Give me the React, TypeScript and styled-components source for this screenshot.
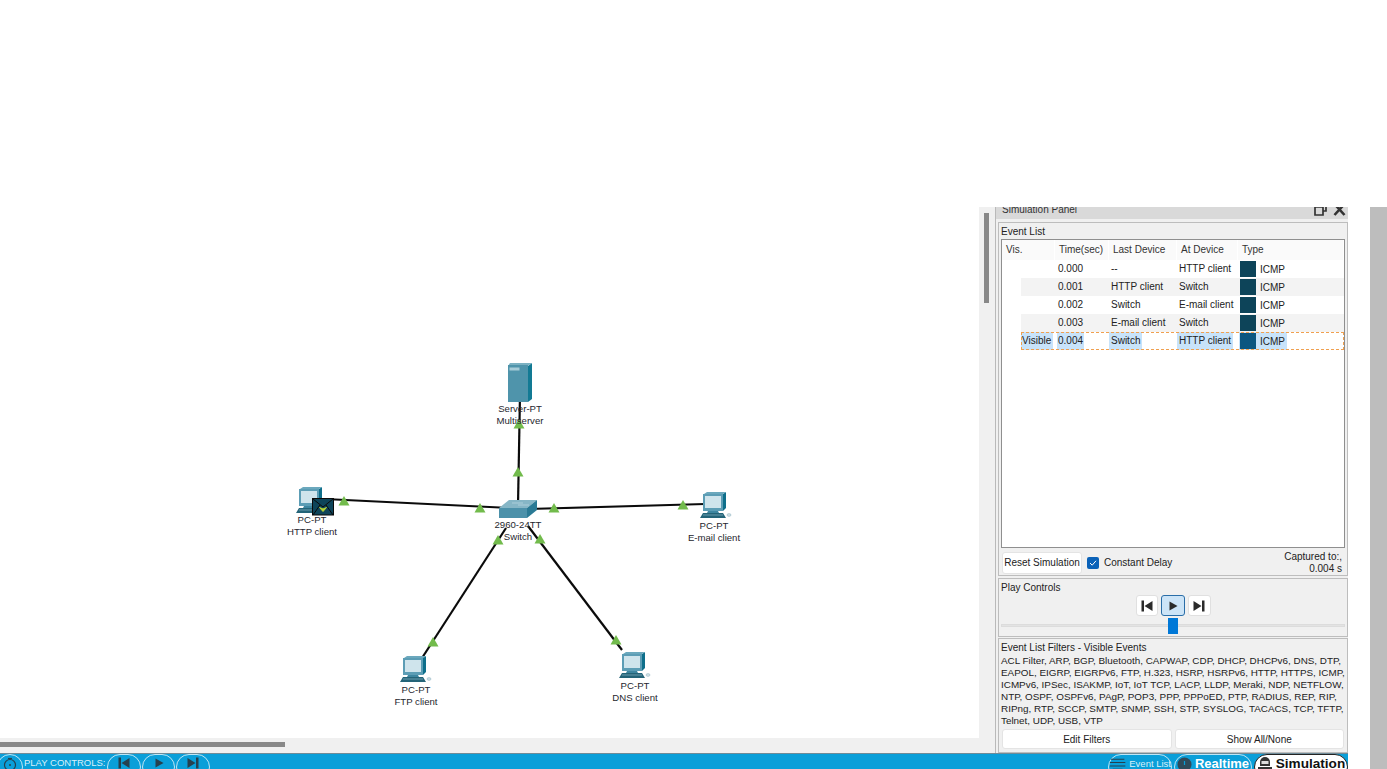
import React from "react";
import styled, { createGlobalStyle } from "styled-components";

const GlobalStyle = createGlobalStyle`
  html, body {
    margin: 0;
    padding: 0;
    background: #fff;
    overflow: hidden;
  }
  body {
    font-family: "Liberation Sans", Arial, sans-serif;
    font-size: 10px;
    color: #222;
  }
`;

const Page = styled.div`
  width: 1387px;
  height: 769px;
  display: flex;
  flex-direction: column;
  overflow: hidden;
`;

const TopBlank = styled.div`
  height: 207px;
  flex: none;
`;

const Window = styled.div`
  flex: 1;
  display: flex;
  min-height: 0;
`;

const MainColumn = styled.div`
  width: 1348px;
  display: flex;
  flex-direction: column;
`;

const RightGap = styled.div`
  width: 22px;
`;

const RightEdge = styled.div`
  width: 17px;
  background: #bdbdbd;
`;

const Workspace = styled.div`
  flex: 1;
  display: flex;
  min-height: 0;
`;

const CanvasColumn = styled.div`
  width: 995px;
  display: flex;
  flex-direction: column;
`;

const CanvasRow = styled.div`
  flex: 1;
  display: flex;
  min-height: 0;
`;

const Canvas = styled.div`
  position: relative;
  width: 979px;
  background: #fff;
  overflow: hidden;
`;

const VScroll = styled.div`
  width: 16px;
  background: #f0f0f0;
  padding: 6px 6px 0 5px;
  box-sizing: border-box;
`;

const VThumb = styled.div`
  height: 90px;
  background: #888;
`;

const HScroll = styled.div`
  height: 15px;
  background: #f0f0f0;
  padding-top: 4px;
  box-sizing: border-box;
`;

const HThumb = styled.div`
  width: 285px;
  height: 5px;
  background: #888;
`;

const Wires = styled.svg`
  position: absolute;
  left: 0;
  top: 0;
`;

const Device = styled.svg<{ $x: number; $y: number }>`
  position: absolute;
  left: ${(p) => p.$x}px;
  top: ${(p) => p.$y - 207}px;
`;

const NodeLabel = styled.div<{ $x: number; $y: number }>`
  position: absolute;
  left: ${(p) => p.$x - 50}px;
  top: ${(p) => p.$y - 207}px;
  width: 100px;
  text-align: center;
  line-height: 12px;
  font-size: 9.6px;
  color: #26262e;
`;

const Panel = styled.div`
  width: 353px;
  background: #f0f0f0;
  border-left: 1px solid #b9b9b9;
  box-sizing: border-box;
  display: flex;
  flex-direction: column;
`;

const PanelHeader = styled.div`
  height: 12px;
  flex: none;
  background: #d9d9d9;
  display: flex;
  justify-content: space-between;
  align-items: flex-end;
  padding: 0 2px 3px 6px;
  box-sizing: border-box;
  overflow: hidden;
  line-height: 12px;
  color: #333;
`;

const HeaderIcons = styled.div`
  display: flex;
  gap: 6px;
  align-items: flex-end;
`;

const Group = styled.section<{ $height: number; $gap: number }>`
  height: ${(p) => p.$height}px;
  flex: none;
  box-sizing: border-box;
  margin: ${(p) => p.$gap}px 0 0 2px;
  border: 1px solid #bdbdbd;
  padding: 0 2px;
  display: flex;
  flex-direction: column;
`;

const GroupTitle = styled.div`
  height: 16px;
  line-height: 17px;
  flex: none;
  color: #222;
`;

const EventTable = styled.div`
  height: 309px;
  flex: none;
  box-sizing: border-box;
  border: 1px solid #8f8f8f;
  background: #fff;
`;

const HeadRow = styled.div`
  display: grid;
  grid-template-columns: 53px 54px 68px 61px 1fr;
  height: 20px;
  background: #fafafa;
`;

const HeadCell = styled.div`
  height: 20px;
  line-height: 20px;
  padding-left: 4px;
  border-right: 1px solid #fff;
  color: #333;
`;

const Stripe = styled.div<{ $alt?: boolean; $selected?: boolean }>`
  margin-left: 19px;
  height: 18px;
  background: ${(p) => (p.$alt ? "#f3f3f3" : "#fff")};
  ${(p) => (p.$selected ? "outline: 1px dashed #f0a050; outline-offset: -1px;" : "")}
`;

const RowCells = styled.div`
  display: grid;
  grid-template-columns: 34px 54px 68px 61px 1fr;
  height: 18px;
  align-items: center;
`;

const Cell = styled.div<{ $pad?: number }>`
  display: flex;
  padding-left: ${(p) => p.$pad ?? 0}px;
  min-width: 0;
`;

const CellText = styled.span<{ $on?: boolean; $width?: number; $inset?: number }>`
  display: block;
  line-height: 18px;
  height: 18px;
  padding: 0 ${(p) => p.$inset ?? 2}px;
  white-space: nowrap;
  background: ${(p) => (p.$on ? "#c8e3fa" : "transparent")};
  ${(p) => (p.$width ? `width: ${p.$width}px; box-sizing: border-box;` : "")}
`;

const TypeCell = styled.div<{ $on?: boolean }>`
  display: flex;
  align-items: center;
  gap: 4px;
  width: 48px;
  margin-left: 1px;
  padding-left: 1px;
  box-sizing: border-box;
  height: 18px;
  background: ${(p) => (p.$on ? "#c8e3fa" : "transparent")};
`;

const Swatch = styled.span<{ $on?: boolean }>`
  width: 16px;
  height: 16px;
  flex: none;
  background: ${(p) => (p.$on ? "#0b5680" : "#0d4459")};
`;

const FooterRow = styled.div`
  flex: 1;
  display: flex;
  align-items: center;
  gap: 5px;
  margin-left: 1px;
  padding-top: 2px;
`;

const WhiteButton = styled.button<{ $grow?: boolean }>`
  font: inherit;
  color: #222;
  background: #fff;
  border: 1px solid #e4e4e4;
  border-radius: 3px;
  padding: 0;
  height: 22px;
  white-space: nowrap;
  width: ${(p) => (p.$grow ? "auto" : "80px")};
  flex: ${(p) => (p.$grow ? 1 : "none")};
`;

const CheckBox = styled.span`
  width: 12px;
  height: 12px;
  border-radius: 2px;
  background: #0b62b8;
  display: flex;
  align-items: center;
  justify-content: center;
  flex: none;
`;

const Captured = styled.div`
  margin-left: auto;
  text-align: right;
  line-height: 12px;
  padding-right: 3px;
`;

const TransportRow = styled.div`
  display: flex;
  justify-content: center;
  gap: 3px;
  height: 21px;
  flex: none;
`;

const TransportButton = styled.button<{ $active?: boolean; $w: number }>`
  width: ${(p) => p.$w}px;
  height: 21px;
  padding: 0;
  box-sizing: border-box;
  background: ${(p) => (p.$active ? "#cce4f7" : "#fff")};
  border: 1px solid ${(p) => (p.$active ? "#2a6ea8" : "#e0e0e0")};
  border-radius: 3px;
  display: flex;
  align-items: center;
  justify-content: center;
`;

const SliderArea = styled.div`
  position: relative;
  flex: 1;
`;

const SliderTrack = styled.div`
  position: absolute;
  left: 0;
  right: 0;
  top: 8px;
  height: 3px;
  background: #e3e3e3;
  border: 1px solid #dcdcdc;
  box-sizing: border-box;
`;

const SliderThumb = styled.div`
  position: absolute;
  left: 167px;
  top: 2px;
  width: 10px;
  height: 16px;
  background: #0078d7;
`;

const FilterText = styled.div`
  font-size: 9.9px;
  line-height: 12px;
  height: 72px;
  flex: none;
  white-space: nowrap;
  color: #222;
`;

const FilterButtons = styled.div`
  display: flex;
  gap: 3px;
  margin: 2px 1px 0 1px;
`;

const FilterButton = styled(WhiteButton)`
  height: 20px;
`;

const Taskbar = styled.div`
  height: 16px;
  flex: none;
  background: #0a9fd9;
  border-top: 1px solid #6f8b98;
  box-sizing: border-box;
  display: flex;
  align-items: flex-start;
  overflow: hidden;
  color: #d8f0fa;
`;

const Pill = styled.div<{ $w: number; $white?: boolean }>`
  width: ${(p) => p.$w}px;
  height: 26px;
  flex: none;
  box-sizing: border-box;
  border: 1px solid ${(p) => (p.$white ? "#222" : "#bfe6f5")};
  border-radius: 13px;
  background: ${(p) => (p.$white ? "#fff" : "transparent")};
  color: ${(p) => (p.$white ? "#111" : "#fff")};
  display: flex;
  align-items: flex-start;
  justify-content: center;
  gap: 3px;
  padding-top: 2px;
  white-space: nowrap;
`;

const HomePill = styled(Pill)`
  margin-left: -3px;
`;

const BarLabel = styled.div`
  margin: 3px 2px 0 1px;
  font-size: 9.5px;
  line-height: 12px;
  white-space: nowrap;
`;

const Spacer = styled.div`
  flex: 1;
`;

const PillGroup = styled.div<{ $gap: number }>`
  display: flex;
  gap: ${(p) => p.$gap}px;
`;

const SmallTab = styled.span`
  font-size: 9.5px;
  line-height: 12px;
  margin-top: 1px;
  color: #d8f0fa;
`;

const BigTab = styled.span<{ $size: number }>`
  font-size: ${(p) => p.$size}px;
  font-weight: 700;
  line-height: 14px;
`;

const triangles = [
  [344, 501],
  [480, 508],
  [518, 472],
  [519, 424],
  [554, 508],
  [683, 505],
  [498, 540],
  [540, 539],
  [433, 642],
  [616, 640],
];

const PcIcon = ({ x, y }: { x: number; y: number }) => (
  <Device $x={x} $y={y} width="34" height="28" viewBox="0 0 34 28">
    <path d="M24 3 L27 1 L27 17 L24 20 Z" fill="#0e6f8b" />
    <path d="M5 3 L8 1 L27 1 L24 3 Z" fill="#6ba8bd" />
    <rect x="4" y="3" width="20" height="17" fill="#5c9db5" />
    <rect x="6" y="5" width="16" height="12" fill="#cfe4ec" />
    <path d="M9 20 H19 L20 22 H8 Z" fill="#3e86a0" />
    <path d="M4 22 H24 L27 27 H1 Z" fill="#246478" />
    <path d="M4 24 H24" stroke="#8ab6c6" strokeWidth="0.7" />
    <ellipse cx="30" cy="24" rx="2" ry="1.4" fill="#cfe0e6" stroke="#7ea7b6" strokeWidth="0.4" />
  </Device>
);

const ServerIcon = () => (
  <Device $x={508} $y={363} width="25" height="40" viewBox="0 0 25 40">
    <path d="M20 3 L24 0 L24 36 L20 39 Z" fill="#127a94" />
    <path d="M2 0 L24 0 L20 3 L0 3 Z" fill="#7bb1c2" />
    <rect x="0" y="2" width="20" height="37" fill="#4f94ab" />
    <rect x="1.5" y="4.5" width="10" height="3" fill="#a7ccd8" />
  </Device>
);

const SwitchIcon = () => (
  <Device $x={499} $y={499} width="39" height="20" viewBox="0 0 39 20">
    <path d="M0 9 L10 1 L38 1 L28 9 Z" fill="#86b6c6" />
    <path d="M13 4 L24 4 M19 6 L30 6" stroke="#b6d4df" strokeWidth="0.8" />
    <rect x="0" y="9" width="28" height="10" fill="#4c91aa" />
    <path d="M28 9 L38 1 L38 11 L28 19 Z" fill="#2a7a95" />
  </Device>
);

const Envelope = () => (
  <Device $x={312} $y={498} width="22" height="18" viewBox="0 0 22 18">
    <rect x="0.5" y="0.5" width="21" height="16.5" fill="#0d4459" stroke="#0a0a0a" />
    <path d="M1 1 L11 9 L21 1 M1 17 L8 7 M21 17 L14 7" fill="none" stroke="#0a0a0a" strokeWidth="1" />
    <path d="M7.5 9.5 L11 13.5 L14.5 9.5 L11 11 Z" fill="#b7d433" stroke="#b7d433" strokeWidth="1" />
  </Device>
);

const Network = () => (
  <Wires width="979" height="531" viewBox="0 207 979 531">
    <g stroke="#0b0b0b" strokeWidth="2.2" fill="none">
      <path d="M520 395 L518 505" />
      <path d="M325 499 L510 508" />
      <path d="M705 504 L528 509" />
      <path d="M422 658 L506 528" />
      <path d="M622 650 L528 526" />
    </g>
  </Wires>
);

const Arrows = () => (
  <Wires width="979" height="531" viewBox="0 207 979 531">
    {triangles.map(([x, y]) => (
      <path key={`${x}-${y}`} d={`M${x} ${y - 5} L${x + 5.5} ${y + 4.5} L${x - 5.5} ${y + 4.5} Z`} fill="#72bb4c" />
    ))}
  </Wires>
);

const SkipIcon = ({ dir, color = "#2b2b2b" }: { dir: "back" | "play" | "next"; color?: string }) => (
  <svg width="12" height="12" viewBox="0 0 12 12">
    {dir === "back" && <path d="M0.5 0.5 H3 V11.5 H0.5 Z M11.5 1 V11 L3.5 6 Z" fill={color} />}
    {dir === "play" && <path d="M2.5 1.5 L10.5 6 L2.5 10.5 Z" fill={color} />}
    {dir === "next" && <path d="M9 0.5 H11.5 V11.5 H9 Z M0.5 1 V11 L8.5 6 Z" fill={color} />}
  </svg>
);

const ClockIcon = () => (
  <svg width="15" height="15" viewBox="0 0 15 15">
    <circle cx="7.5" cy="7.5" r="7" fill="#2f4a5a" />
    <path d="M7.5 4 V8" stroke="#0a9fd9" strokeWidth="1.2" />
  </svg>
);

const StopwatchIcon = () => (
  <svg width="16" height="15" viewBox="0 0 16 15">
    <path d="M3 5 A5 5 0 0 1 13 5 V9 H3 Z" fill="#333" />
    <rect x="4.5" y="4" width="7" height="3" fill="#ddd" />
    <rect x="1" y="10" width="14" height="3" fill="#333" />
    <circle cx="3" cy="14" r="1" fill="#333" />
    <circle cx="13" cy="14" r="1" fill="#333" />
  </svg>
);

const ListIcon = () => (
  <svg width="18" height="15" viewBox="0 0 18 15">
    <path d="M2 2 H16 M1 5.5 H17 M1 9 H17 M4 12.5 H14" stroke="#26414f" strokeWidth="1.1" />
  </svg>
);

const events = [
  { time: "0.000", last: "--", at: "HTTP client" },
  { time: "0.001", last: "HTTP client", at: "Switch" },
  { time: "0.002", last: "Switch", at: "E-mail client" },
  { time: "0.003", last: "E-mail client", at: "Switch" },
  { time: "0.004", last: "Switch", at: "HTTP client", selected: true },
];

const filterLines = [
  "ACL Filter, ARP, BGP, Bluetooth, CAPWAP, CDP, DHCP, DHCPv6, DNS, DTP,",
  "EAPOL, EIGRP, EIGRPv6, FTP, H.323, HSRP, HSRPv6, HTTP, HTTPS, ICMP,",
  "ICMPv6, IPSec, ISAKMP, IoT, IoT TCP, LACP, LLDP, Meraki, NDP, NETFLOW,",
  "NTP, OSPF, OSPFv6, PAgP, POP3, PPP, PPPoED, PTP, RADIUS, REP, RIP,",
  "RIPng, RTP, SCCP, SMTP, SNMP, SSH, STP, SYSLOG, TACACS, TCP, TFTP,",
  "Telnet, UDP, USB, VTP",
];

export default function App() {
  return (
    <Page>
      <GlobalStyle />
      <TopBlank />
      <Window>
        <MainColumn>
          <Workspace>
            <CanvasColumn>
              <CanvasRow>
                <Canvas>
                  <Network />
                  <ServerIcon />
                  <PcIcon x={295} y={486} />
                  <PcIcon x={699} y={491} />
                  <PcIcon x={399} y={655} />
                  <PcIcon x={618} y={651} />
                  <SwitchIcon />
                  <Arrows />
                  <Envelope />
                  <NodeLabel $x={520} $y={403}>
                    Server-PT
                    <br />
                    Multiserver
                  </NodeLabel>
                  <NodeLabel $x={312} $y={514}>
                    PC-PT
                    <br />
                    HTTP client
                  </NodeLabel>
                  <NodeLabel $x={518} $y={519}>
                    2960-24TT
                    <br />
                    Switch
                  </NodeLabel>
                  <NodeLabel $x={714} $y={520}>
                    PC-PT
                    <br />
                    E-mail client
                  </NodeLabel>
                  <NodeLabel $x={416} $y={684}>
                    PC-PT
                    <br />
                    FTP client
                  </NodeLabel>
                  <NodeLabel $x={635} $y={680}>
                    PC-PT
                    <br />
                    DNS client
                  </NodeLabel>
                </Canvas>
                <VScroll>
                  <VThumb />
                </VScroll>
              </CanvasRow>
              <HScroll>
                <HThumb />
              </HScroll>
            </CanvasColumn>
            <Panel>
              <PanelHeader>
                <span>Simulation Panel</span>
                <HeaderIcons>
                  <svg width="13" height="13" viewBox="0 0 13 13">
                    <path d="M1 4 H9 V12 H1 Z M5 4 V1 H12 V8 H9" fill="none" stroke="#333" strokeWidth="1.7" />
                  </svg>
                  <svg width="13" height="13" viewBox="0 0 13 13">
                    <path d="M1.5 1 L11.5 12 M11.5 1 L1.5 12" stroke="#333" strokeWidth="2.6" />
                  </svg>
                </HeaderIcons>
              </PanelHeader>
              <Group $height={354} $gap={3}>
                <GroupTitle>Event List</GroupTitle>
                <EventTable>
                  <HeadRow>
                    <HeadCell>Vis.</HeadCell>
                    <HeadCell>Time(sec)</HeadCell>
                    <HeadCell>Last Device</HeadCell>
                    <HeadCell>At Device</HeadCell>
                    <HeadCell>Type</HeadCell>
                  </HeadRow>
                  {events.map((ev, i) => (
                    <Stripe key={ev.time} $alt={i % 2 === 1} $selected={ev.selected}>
                      <RowCells>
                        <Cell>
                          {ev.selected && (
                            <CellText $on $width={32} $inset={1}>
                              Visible
                            </CellText>
                          )}
                        </Cell>
                        <Cell $pad={2}>
                          <CellText $on={ev.selected} $width={ev.selected ? 27 : undefined} $inset={1}>
                            {ev.time}
                          </CellText>
                        </Cell>
                        <Cell>
                          <CellText $on={ev.selected}>{ev.last}</CellText>
                        </Cell>
                        <Cell>
                          <CellText $on={ev.selected}>{ev.at}</CellText>
                        </Cell>
                        <TypeCell $on={ev.selected}>
                          <Swatch $on={ev.selected} />
                          <span>ICMP</span>
                        </TypeCell>
                      </RowCells>
                    </Stripe>
                  ))}
                </EventTable>
                <FooterRow>
                  <WhiteButton>Reset Simulation</WhiteButton>
                  <CheckBox>
                    <svg width="8" height="8" viewBox="0 0 8 8">
                      <path d="M1 4 L3.2 6.2 L7 1.8" fill="none" stroke="#fff" strokeWidth="1" />
                    </svg>
                  </CheckBox>
                  <span>Constant Delay</span>
                  <Captured>
                    Captured to:,
                    <br />
                    0.004 s
                  </Captured>
                </FooterRow>
              </Group>
              <Group $height={59} $gap={2}>
                <GroupTitle>Play Controls</GroupTitle>
                <TransportRow>
                  <TransportButton $w={22}>
                    <SkipIcon dir="back" />
                  </TransportButton>
                  <TransportButton $w={24} $active>
                    <SkipIcon dir="play" />
                  </TransportButton>
                  <TransportButton $w={23}>
                    <SkipIcon dir="next" />
                  </TransportButton>
                </TransportRow>
                <SliderArea>
                  <SliderTrack />
                  <SliderThumb />
                </SliderArea>
              </Group>
              <Group $height={115} $gap={1}>
                <GroupTitle>Event List Filters - Visible Events</GroupTitle>
                <FilterText>
                  {filterLines.map((line) => (
                    <div key={line}>{line}</div>
                  ))}
                </FilterText>
                <FilterButtons>
                  <FilterButton $grow>Edit Filters</FilterButton>
                  <FilterButton $grow>Show All/None</FilterButton>
                </FilterButtons>
              </Group>
            </Panel>
          </Workspace>
          <Taskbar>
            <HomePill $w={26}>
              <svg width="14" height="14" viewBox="0 0 14 14">
                <circle cx="7" cy="8" r="5.5" fill="none" stroke="#26414f" strokeWidth="1.2" />
                <circle cx="7" cy="8" r="1" fill="#26414f" />
                <path d="M5 1.5 H9" stroke="#26414f" strokeWidth="1.2" />
              </svg>
            </HomePill>
            <BarLabel>PLAY CONTROLS:</BarLabel>
            <PillGroup $gap={1}>
              <Pill $w={34}>
                <SkipIcon dir="back" color="#26414f" />
              </Pill>
              <Pill $w={33}>
                <SkipIcon dir="play" color="#26414f" />
              </Pill>
              <Pill $w={34}>
                <SkipIcon dir="next" color="#26414f" />
              </Pill>
            </PillGroup>
            <Spacer />
            <PillGroup $gap={2}>
              <Pill $w={64}>
                <ListIcon />
                <SmallTab>Event List</SmallTab>
              </Pill>
              <Pill $w={78}>
                <ClockIcon />
                <BigTab $size={13}>Realtime</BigTab>
              </Pill>
              <Pill $w={94} $white>
                <StopwatchIcon />
                <BigTab $size={13.6}>Simulation</BigTab>
              </Pill>
            </PillGroup>
          </Taskbar>
        </MainColumn>
        <RightGap />
        <RightEdge />
      </Window>
    </Page>
  );
}
